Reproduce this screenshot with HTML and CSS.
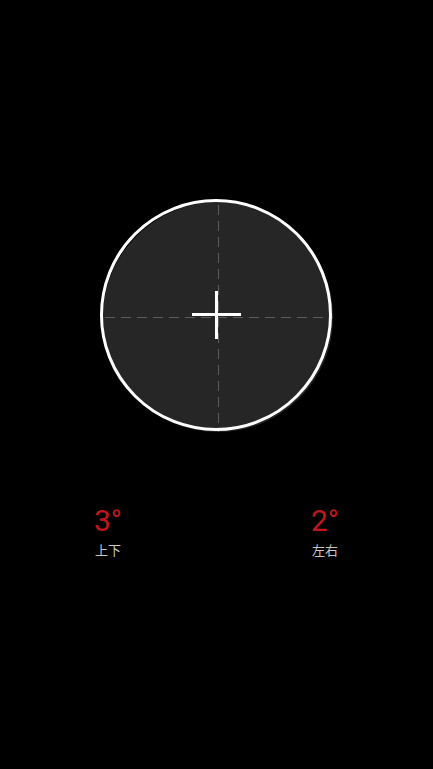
FILE: index.html
```html
<!DOCTYPE html>
<html>
<head>
<meta charset="utf-8">
<link rel="stylesheet" href="styles.css">
</head>
<body>
<main class="screen">
  <div class="level">
    <div class="disk">
      <div class="dash-h"></div>
      <div class="dash-v"></div>
    </div>
    <div class="ring"></div>
    <div class="cross-h"></div>
    <div class="cross-v"></div>
  </div>
  <div class="readings">
    <div class="reading">
      <div class="value">3°</div>
      <div class="label">上下</div>
    </div>
    <div class="reading">
      <div class="value">2°</div>
      <div class="label">左右</div>
    </div>
  </div>
</main>
</body>
</html>
```
FILE: styles.css
```css
html, body {
  margin: 0;
  padding: 0;
  background: #000;
}
.screen {
  width: 433px;
  height: 769px;
  display: flex;
  flex-direction: column;
  align-items: center;
  padding-top: 199px;
  box-sizing: border-box;
  font-family: Roboto, "Noto Sans CJK SC", sans-serif;
}
.level {
  position: relative;
  width: 232px;
  height: 232px;
  margin-left: -1px;
}
.disk {
  position: absolute;
  left: 3px;
  top: 3px;
  width: 230px;
  height: 230px;
  border-radius: 50%;
  background: #262626;
  overflow: hidden;
}
.dash-h {
  position: absolute;
  left: 2px;
  right: 0;
  top: 115px;
  height: 1px;
  background: repeating-linear-gradient(90deg, #5c5c5c 0 10px, transparent 10px 16px);
}
.dash-v {
  position: absolute;
  top: 3px;
  bottom: 0;
  left: 115px;
  width: 1px;
  background: repeating-linear-gradient(180deg, #5c5c5c 0 10px, transparent 10px 16px);
}
.ring {
  position: absolute;
  inset: 0;
  border: 3px solid #fff;
  border-radius: 50%;
  box-sizing: border-box;
}
.cross-h {
  position: absolute;
  left: 92px;
  top: 114px;
  width: 49px;
  height: 3px;
  background: #fff;
}
.cross-v {
  position: absolute;
  left: 115px;
  top: 92px;
  width: 3px;
  height: 48px;
  background: #fff;
}
.readings {
  width: 100%;
  box-sizing: border-box;
  display: flex;
  justify-content: space-between;
  padding: 0 94px 0 95px;
  margin-top: 73px;
}
.reading {
  display: flex;
  flex-direction: column;
}
.value {
  color: #c1171c;
  font-size: 30px;
  line-height: 34px;
  margin-left: -1px;
}
.label {
  color: #c8c8c8;
  font-size: 13px;
  line-height: 16px;
  margin-top: 5px;
}
```
